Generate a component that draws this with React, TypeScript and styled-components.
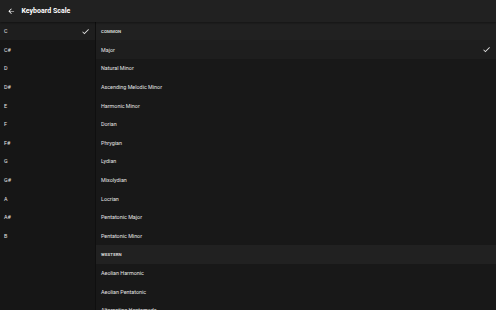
import React from "react";
import styled, { createGlobalStyle } from "styled-components";

const Global = createGlobalStyle`
  html, body { margin: 0; padding: 0; background: #161616; }
  body { font-family: Roboto, "Noto Sans", sans-serif; overflow: hidden; }
  * { box-sizing: border-box; }
`;

const ROW = 18.64;

const Page = styled.div`
  width: 496px;
  height: 310px;
  display: flex;
  flex-direction: column;
  overflow: hidden;
  background: #161616;
`;

const TopBar = styled.div`
  height: 21.7px;
  flex: none;
  display: flex;
  align-items: center;
  background: #212121;
  padding-left: 6.5px;
  gap: 6.5px;
  box-shadow: 0 1px 2px rgba(0,0,0,0.4);
  position: relative;
  z-index: 1;
`;

const Title = styled.span`
  color: #ffffff;
  font-size: 7px;
  font-weight: 700;
`;

const Body = styled.div`
  flex: 1;
  display: flex;
  min-height: 0;
`;

const KeyColumn = styled.div`
  width: 96px;
  flex: none;
  background: #161616;
  border-right: 1px solid #0f0f0f;
  display: flex;
  flex-direction: column;
`;

const ScaleColumn = styled.div`
  flex: 1;
  background: #181818;
  display: flex;
  flex-direction: column;
`;

const Row = styled.div<{ $selected?: boolean; $pad: number }>`
  height: ${ROW}px;
  flex: none;
  display: flex;
  align-items: center;
  justify-content: space-between;
  padding: 0 5px 0 ${(p) => p.$pad}px;
  background: ${(p) => (p.$selected ? "#1e1e1e" : "transparent")};
  color: #e4e4e4;
  font-size: 5.4px;
  font-weight: 400;
`;

const Section = styled.div`
  height: ${ROW}px;
  flex: none;
  display: flex;
  align-items: center;
  padding-left: 5px;
  background: #212121;
  color: #d8d8d8;
  font-size: 4.4px;
  font-weight: 700;
  letter-spacing: 0.1px;
`;

const Check = () => (
  <svg width="9" height="9" viewBox="0 0 24 24" fill="#e0e0e0">
    <path d="M9 16.17L4.83 12l-1.42 1.41L9 19 21 7l-1.41-1.41z" />
  </svg>
);

const Back = () => (
  <svg width="8.5" height="8.5" viewBox="0 0 24 24" fill="#ffffff">
    <path d="M20 11H7.83l5.59-5.59L12 4l-8 8 8 8 1.41-1.41L7.83 13H20v-2z" />
  </svg>
);

const keys = ["C", "C#", "D", "D#", "E", "F", "F#", "G", "G#", "A", "A#", "B"];

type Item = { type: "section" | "item"; label: string; selected?: boolean };

const scales: Item[] = [
  { type: "section", label: "COMMON" },
  { type: "item", label: "Major", selected: true },
  { type: "item", label: "Natural Minor" },
  { type: "item", label: "Ascending Melodic Minor" },
  { type: "item", label: "Harmonic Minor" },
  { type: "item", label: "Dorian" },
  { type: "item", label: "Phrygian" },
  { type: "item", label: "Lydian" },
  { type: "item", label: "Mixolydian" },
  { type: "item", label: "Locrian" },
  { type: "item", label: "Pentatonic Major" },
  { type: "item", label: "Pentatonic Minor" },
  { type: "section", label: "WESTERN" },
  { type: "item", label: "Aeolian Harmonic" },
  { type: "item", label: "Aeolian Pentatonic" },
  { type: "item", label: "Alternating Heptamode" },
];

export default function App() {
  return (
    <Page>
      <Global />
      <TopBar>
        <Back />
        <Title>Keyboard Scale</Title>
      </TopBar>
      <Body>
        <KeyColumn>
          {keys.map((k, i) => (
            <Row key={k} $pad={4} $selected={i === 0}>
              <span>{k}</span>
              {i === 0 && <Check />}
            </Row>
          ))}
        </KeyColumn>
        <ScaleColumn>
          {scales.map((s) =>
            s.type === "section" ? (
              <Section key={s.label}>{s.label}</Section>
            ) : (
              <Row key={s.label} $pad={5} $selected={s.selected}>
                <span>{s.label}</span>
                {s.selected && <Check />}
              </Row>
            )
          )}
        </ScaleColumn>
      </Body>
    </Page>
  );
}
